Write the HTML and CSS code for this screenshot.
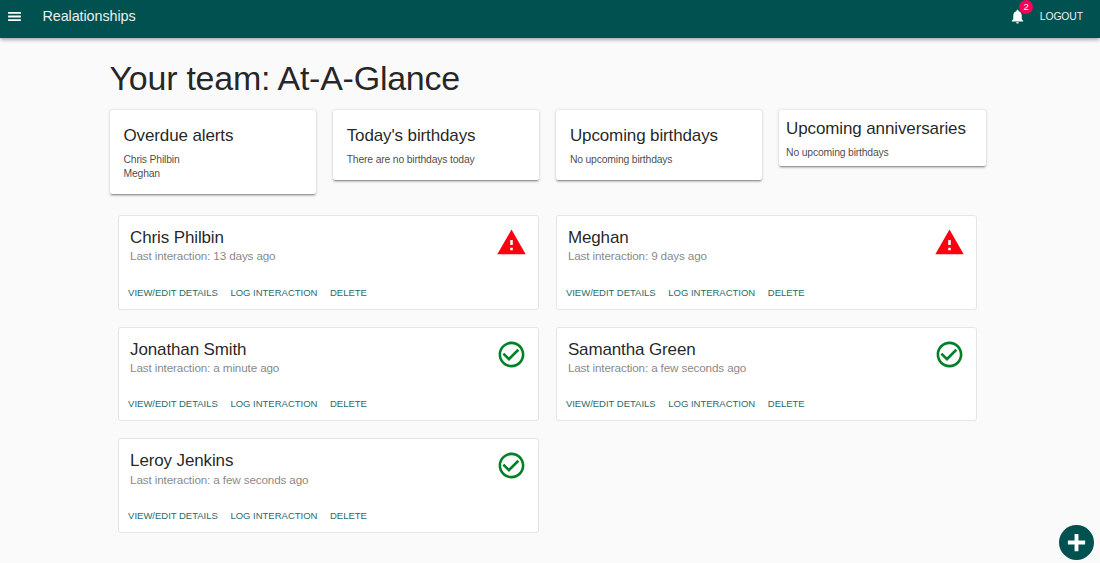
FILE: index.html
```html
<!DOCTYPE html>
<html lang="en">
<head>
<meta charset="utf-8">
<title>Realationships</title>
<link rel="stylesheet" href="styles.css">
</head>
<body>
<svg class="sprite" aria-hidden="true">
  <symbol id="warning" viewBox="0 0 24 24"><path d="M1 21h22L12 2 1 21zm12-3h-2v-2h2v2zm0-4h-2v-4h2v4z"/></symbol>
  <symbol id="check" viewBox="0 0 24 24"><path d="M16.59 7.58L10 14.17l-3.59-3.58L5 12l5 5 8-8zM12 2C6.48 2 2 6.48 2 12s4.48 10 10 10 10-4.48 10-10S17.52 2 12 2zm0 18c-4.42 0-8-3.58-8-8s3.58-8 8-8 8 3.58 8 8-3.58 8-8 8z"/></symbol>
</svg>
<header class="appbar">
  <svg class="menu" viewBox="0 0 24 24"><path d="M3 18.5h18v-2.7H3v2.7zm0-5.2h18v-2.7H3v2.7zm0-7.8v2.7h18V5.5H3z"/></svg>
  <span class="brand">Realationships</span>
  <span class="bell"><svg viewBox="0 0 24 24"><path d="M12 22c1.1 0 2-.9 2-2h-4c0 1.1.89 2 2 2zm6-6v-5c0-3.07-1.64-5.64-4.5-6.32V4c0-.83-.67-1.5-1.5-1.5s-1.5.67-1.5 1.5v.68C7.63 5.36 6 7.92 6 11v5l-2 2v1h16v-1l-2-2z"/></svg><span class="badge">2</span></span>
  <span class="logout">LOGOUT</span>
</header>
<main class="page">
  <h1 class="heading">Your team: At-A-Glance</h1>
  <section class="summary">
    <div class="panel"><h2>Overdue alerts</h2><p>Chris Philbin</p><p>Meghan</p></div>
    <div class="panel"><h2>Today's birthdays</h2><p>There are no birthdays today</p></div>
    <div class="panel"><h2>Upcoming birthdays</h2><p>No upcoming birthdays</p></div>
    <div class="panel compact"><h2>Upcoming anniversaries</h2><p>No upcoming birthdays</p></div>
  </section>
  <section class="team">
    <article class="card"><div class="top"><div><h3>Chris Philbin</h3><p>Last interaction: 13 days ago</p></div><svg class="status late"><use href="#warning"/></svg></div><div class="actions"><span>VIEW/EDIT DETAILS</span><span>LOG INTERACTION</span><span>DELETE</span></div></article>
    <article class="card"><div class="top"><div><h3>Meghan</h3><p>Last interaction: 9 days ago</p></div><svg class="status late"><use href="#warning"/></svg></div><div class="actions"><span>VIEW/EDIT DETAILS</span><span>LOG INTERACTION</span><span>DELETE</span></div></article>
    <article class="card"><div class="top"><div><h3>Jonathan Smith</h3><p>Last interaction: a minute ago</p></div><svg class="status good"><use href="#check"/></svg></div><div class="actions"><span>VIEW/EDIT DETAILS</span><span>LOG INTERACTION</span><span>DELETE</span></div></article>
    <article class="card"><div class="top"><div><h3>Samantha Green</h3><p>Last interaction: a few seconds ago</p></div><svg class="status good"><use href="#check"/></svg></div><div class="actions"><span>VIEW/EDIT DETAILS</span><span>LOG INTERACTION</span><span>DELETE</span></div></article>
    <article class="card"><div class="top"><div><h3>Leroy Jenkins</h3><p>Last interaction: a few seconds ago</p></div><svg class="status good"><use href="#check"/></svg></div><div class="actions"><span>VIEW/EDIT DETAILS</span><span>LOG INTERACTION</span><span>DELETE</span></div></article>
  </section>
</main>
<div class="fab"><svg viewBox="0 0 24 24"><path d="M10 3h4v7h7v4h-7v7h-4v-7H3v-4h7z"/></svg></div>
</body>
</html>
```
FILE: styles.css
```css
* { box-sizing: border-box; }
body {
  margin: 0;
  height: 563px;
  overflow: hidden;
  background: #fafafa;
  color: rgba(0, 0, 0, .87);
  font-family: "Liberation Sans", Arial, sans-serif;
}
h1, h2, h3, p { margin: 0; font-weight: 400; }
.sprite { position: absolute; width: 0; height: 0; }
.appbar {
  display: flex;
  align-items: center;
  height: 38px;
  padding: 0 17px 6px 6px;
  background: #00514f;
  color: #fff;
  box-shadow: 0 1.4px 2.8px -.7px rgba(0,0,0,.2), 0 2.8px 3.5px rgba(0,0,0,.14), 0 .7px 7px rgba(0,0,0,.12);
}
.appbar svg { display: block; width: 17px; height: 17px; fill: #fff; }
.brand { margin-left: 19.5px; font-size: 14.4px; letter-spacing: -.1px; color: #e9f0f0; }
.bell { position: relative; margin-left: auto; }
.badge {
  position: absolute;
  left: 10px;
  top: -8px;
  width: 14px;
  height: 14px;
  border-radius: 50%;
  background: #f50057;
  font-size: 9.6px;
  line-height: 14px;
  text-align: center;
}
.logout { margin-left: 13.6px; font-size: 10.4px; letter-spacing: -.1px; color: #e9f0f0; }
.page { width: 876px; margin: 20px 0 0 109.5px; }
.heading { font-size: 34px; line-height: 40px; letter-spacing: -.25px; }
.summary {
  display: grid;
  grid-template-columns: repeat(4, 1fr);
  gap: 16.8px;
  align-items: start;
  margin-top: 12px;
}
.panel {
  padding: 14px 14px 13.2px;
  border-radius: 2.8px;
  background: #fff;
  box-shadow: 0 2.1px .7px -1.4px rgba(0,0,0,.2), 0 1.4px 1.8px rgba(0,0,0,.16), 0 .7px 3.5px rgba(0,0,0,.14);
}
.panel.compact { padding: 7px 7px 6.2px; }
.panel h2 { padding-top: 1px; margin-bottom: 5.2px; font-size: 17px; line-height: 22.4px; letter-spacing: -.12px; }
.panel p { font-size: 10.4px; line-height: 14px; letter-spacing: -.18px; color: rgba(0,0,0,.74); }
.team {
  display: grid;
  grid-template-columns: 1fr 1fr;
  gap: 16.8px;
  margin-top: 21.2px;
  padding: 0 8.6px;
}
.card {
  display: flex;
  flex-direction: column;
  justify-content: space-between;
  height: 94.8px;
  padding: 11px 11px 10px;
  border: 1px solid #e4e4e4;
  border-radius: 2.8px;
  background: #fff;
}
.top { display: flex; justify-content: space-between; }
.card h3 { font-size: 17px; line-height: 22.4px; letter-spacing: -.13px; }
.card p { margin-top: -1px; font-size: 11.7px; line-height: 16.8px; letter-spacing: -.14px; color: rgba(0,0,0,.5); }
.status { width: 31px; height: 31px; }
.late { fill: #ff0013; }
.good { fill: #008026; }
.actions { display: flex; gap: 12.6px; margin-left: -2px; color: #286c6a; font-size: 9.5px; line-height: 12px; letter-spacing: -.01px; }
.fab {
  position: fixed;
  right: 6.5px;
  bottom: 3.5px;
  display: flex;
  align-items: center;
  justify-content: center;
  width: 35px;
  height: 35px;
  border-radius: 50%;
  background: #00514f;
}
.fab svg { width: 23px; height: 23px; fill: #fff; }
```
